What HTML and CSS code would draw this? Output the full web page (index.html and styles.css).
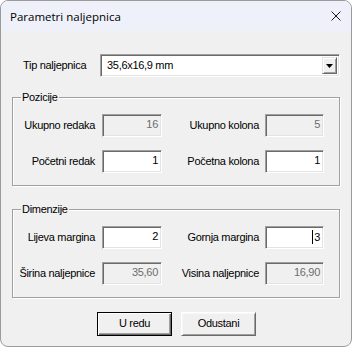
FILE: index.html
```html
<!doctype html>
<html>

<head>
    <title>Parametri naljepnica</title>
    <link rel="stylesheet" href="styles.css">
</head>

<body>
    <div class="window">
        <div class="titlebar">
            <span class="title">Parametri naljepnica</span>
            <svg class="close" width="10" height="10" viewBox="0 0 10 10">
                <path d="M0.5 0.5 L9.5 9.5 M9.5 0.5 L0.5 9.5" stroke="#1a1a1a" stroke-width="1" fill="none" />
            </svg>
        </div>
        <div class="content">
            <div class="type_row">
                <label class="type_label">Tip naljepnica</label>
                <div class="combo">
                    <span class="combo_text">35,6x16,9 mm</span>
                    <span class="combo_btn">
                        <svg width="7" height="4" viewBox="0 0 7 4"><path d="M0 0 H7 L3.5 4 Z" fill="#000" /></svg>
                    </span>
                </div>
            </div>

            <fieldset class="group">
                <legend>Pozicije</legend>
                <div class="rows">
                    <label class="lbl">Ukupno redaka</label>
                    <div class="field disabled">16</div>
                    <label class="lbl lbl_right">Ukupno kolona</label>
                    <div class="field disabled">5</div>

                    <label class="lbl">Početni redak</label>
                    <div class="field">1</div>
                    <label class="lbl lbl_right">Početna kolona</label>
                    <div class="field">1</div>
                </div>
            </fieldset>

            <fieldset class="group group2">
                <legend>Dimenzije</legend>
                <div class="rows">
                    <label class="lbl">Lijeva margina</label>
                    <div class="field">2</div>
                    <label class="lbl lbl_right">Gornja margina</label>
                    <div class="field"><span class="caret"></span>3</div>

                    <label class="lbl">Širina naljepnice</label>
                    <div class="field disabled">35,60</div>
                    <label class="lbl lbl_right">Visina naljepnice</label>
                    <div class="field disabled">16,90</div>
                </div>
            </fieldset>

            <div class="buttons">
                <div class="btn default">U redu</div>
                <div class="btn">Odustani</div>
            </div>
        </div>
    </div>
</body>

</html>
```

FILE: styles.css
```css
body {
    margin: 0;
    background-color: #ffffff;
    font-family: "Liberation Sans", Arial, sans-serif;
    font-size: 11px;
    line-height: 13px;
    letter-spacing: -0.3px;
    color: #000;
}

.window {
    box-sizing: border-box;
    width: 352px;
    height: 347px;
    border: 1px solid #9b9b9b;
    border-radius: 8px;
    background-color: #f0f0f0;
    overflow: hidden;
}

.titlebar {
    height: 30px;
    background-color: #eef1fa;
    display: flex;
    align-items: center;
    justify-content: space-between;
    padding: 0 10px 0 9px;
}

.title {
    font-family: "Open Sans", "Liberation Sans", sans-serif;
    font-size: 11.5px;
    letter-spacing: 0;
    color: #000;
    margin-top: 1px;
}

.content {
    padding-top: 23px;
}

.type_row {
    display: flex;
    align-items: center;
}

.type_label {
    width: 77px;
    margin-left: 22px;
}

.combo {
    box-sizing: border-box;
    width: 240px;
    height: 23px;
    background: #fff;
    border: 1px solid;
    border-color: #a0a0a0 #fff #fff #a0a0a0;
    box-shadow: inset 1px 1px 0 #696969, inset -1px -1px 0 #e3e3e3;
    display: flex;
    align-items: center;
    justify-content: space-between;
    padding: 2px 2px 2px 6px;
}

.combo_btn {
    box-sizing: border-box;
    width: 15px;
    height: 17px;
    background: #f0f0f0;
    border: 1px solid;
    border-color: #e3e3e3 #696969 #696969 #e3e3e3;
    box-shadow: inset 1px 1px 0 #fff, inset -1px -1px 0 #a0a0a0;
    display: flex;
    align-items: center;
    justify-content: center;
}

.group {
    box-sizing: border-box;
    width: 328px;
    margin: 14px 0 0 11px;
    padding: 10px 0 12px 0;
    border: 1px solid #a0a0a0;
    box-shadow: inset 1px 1px 0 #fff, 1px 1px 0 #fff;
}

.group2 {
    margin-top: 17px;
}

.group legend {
    margin-left: 8px;
    padding: 0 1px;
    background-color: #f0f0f0;
}

.rows {
    display: grid;
    grid-template-columns: 89px 60px 103px 59px;
    row-gap: 13px;
    align-items: center;
}

.lbl {
    text-align: right;
    padding-right: 7px;
    white-space: nowrap;
}

.lbl_right {
    padding-right: 6px;
}

.field {
    box-sizing: border-box;
    height: 23px;
    background: #fff;
    border: 1px solid;
    border-color: #a0a0a0 #fff #fff #a0a0a0;
    box-shadow: inset 1px 1px 0 #696969, inset -1px -1px 0 #e3e3e3;
    text-align: right;
    padding: 3px 3px 0 0;
}

.disabled {
    background: #f0f0f0;
    color: #6d6d6d;
}

.caret {
    display: inline-block;
    width: 1px;
    height: 14px;
    background: #000;
    vertical-align: -3px;
    margin-right: 1px;
}

.buttons {
    display: flex;
    justify-content: center;
    gap: 9px;
    margin-top: 14px;
    padding-left: 1px;
}

.btn {
    box-sizing: border-box;
    width: 75px;
    height: 24px;
    background: #f0f0f0;
    border: 1px solid;
    border-color: #fff #696969 #696969 #fff;
    box-shadow: inset 1px 1px 0 #f8f8f8, inset -1px -1px 0 #a0a0a0;
    text-align: center;
    line-height: 21px;
}

.default {
    border: 1px solid #000;
    box-shadow: inset 1px 1px 0 #fff, inset -1px -1px 0 #696969, inset -2px -2px 0 #a0a0a0;
}
```
